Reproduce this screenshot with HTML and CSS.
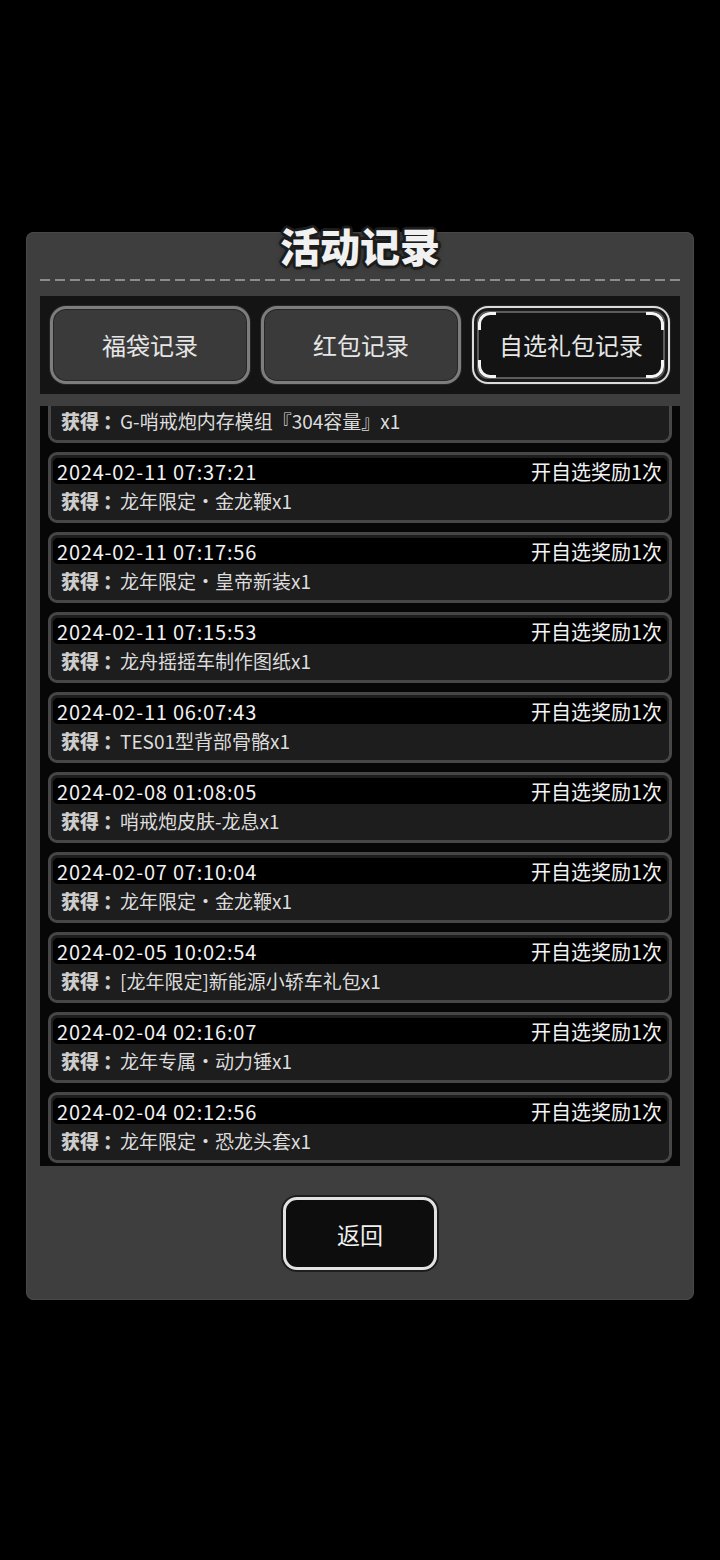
FILE: index.html
```html
<!DOCTYPE html>
<html lang="zh-CN">
  <head>
    <meta charset="UTF-8" />
    <meta name="viewport" content="width=device-width, initial-scale=1.0" />
    <title>活动记录</title>
    <link rel="stylesheet" href="styles.css">
  </head>
  <body>
    <!-- Record dialog -->
    <div class="panel">
      <div class="panel-head">
        <h1 class="title">活动记录</h1>
      </div>
      <div class="dash"></div>

      <!-- Tabs -->
      <div class="tabs">
        <div class="tab">福袋记录</div>
        <div class="tab">红包记录</div>
        <div class="tab active">自选礼包记录</div>
      </div>

      <!-- Record list (scrolled a little, first row half hidden) -->
      <div class="list">
        <div class="list-inner">
          <div class="item">
            <div class="item-top"></div>
            <div class="item-body"><b>获得<i>：</i></b>G-哨戒炮内存模组『304容量』x1</div>
          </div>
          <div class="item">
            <div class="item-top"><span>2024-02-11 07:37:21</span><span>开自选奖励1次</span></div>
            <div class="item-body"><b>获得<i>：</i></b>龙年限定<em>·</em>金龙鞭x1</div>
          </div>
          <div class="item">
            <div class="item-top"><span>2024-02-11 07:17:56</span><span>开自选奖励1次</span></div>
            <div class="item-body"><b>获得<i>：</i></b>龙年限定<em>·</em>皇帝新装x1</div>
          </div>
          <div class="item">
            <div class="item-top"><span>2024-02-11 07:15:53</span><span>开自选奖励1次</span></div>
            <div class="item-body"><b>获得<i>：</i></b>龙舟摇摇车制作图纸x1</div>
          </div>
          <div class="item">
            <div class="item-top"><span>2024-02-11 06:07:43</span><span>开自选奖励1次</span></div>
            <div class="item-body"><b>获得<i>：</i></b>TES01型背部骨骼x1</div>
          </div>
          <div class="item">
            <div class="item-top"><span>2024-02-08 01:08:05</span><span>开自选奖励1次</span></div>
            <div class="item-body"><b>获得<i>：</i></b>哨戒炮皮肤-龙息x1</div>
          </div>
          <div class="item">
            <div class="item-top"><span>2024-02-07 07:10:04</span><span>开自选奖励1次</span></div>
            <div class="item-body"><b>获得<i>：</i></b>龙年限定<em>·</em>金龙鞭x1</div>
          </div>
          <div class="item">
            <div class="item-top"><span>2024-02-05 10:02:54</span><span>开自选奖励1次</span></div>
            <div class="item-body"><b>获得<i>：</i></b>[龙年限定]新能源小轿车礼包x1</div>
          </div>
          <div class="item">
            <div class="item-top"><span>2024-02-04 02:16:07</span><span>开自选奖励1次</span></div>
            <div class="item-body"><b>获得<i>：</i></b>龙年专属<em>·</em>动力锤x1</div>
          </div>
          <div class="item">
            <div class="item-top"><span>2024-02-04 02:12:56</span><span>开自选奖励1次</span></div>
            <div class="item-body"><b>获得<i>：</i></b>龙年限定<em>·</em>恐龙头套x1</div>
          </div>
        </div>
      </div>

      <div class="foot">
        <div class="back-btn">返回</div>
      </div>
    </div>
  </body>
</html>
```

FILE: styles.css
```css
body {
  margin: 0;
  padding: 232px 26px 0;
  background: #000;
  font-family: "Noto Sans CJK SC", "Noto Sans", sans-serif;
  color: #eee;
}
.panel {
  background: #3e3e3e;
  border-radius: 8px;
  padding: 0 14px 30px;
  box-shadow: inset 0 0 0 1px #484848;
}
.panel-head {
  height: 46px;
  display: flex;
  justify-content: center;
}
.title {
  margin: -11px 0 0;
  font-size: 40px;
  line-height: 48px;
  font-weight: 900;
  color: #f1f1f1;
  text-shadow:
    3px 0 0 #1c1c1c, -3px 0 0 #1c1c1c, 0 3px 0 #1c1c1c, 0 -3px 0 #1c1c1c,
    2px 2px 0 #1c1c1c, -2px 2px 0 #1c1c1c, 2px -2px 0 #1c1c1c, -2px -2px 0 #1c1c1c,
    0 0 6px rgba(0, 0, 0, 0.8);
}
.dash {
  height: 2px;
  margin-top: 1px;
  background: repeating-linear-gradient(90deg, #8c8c8c 0 10px, transparent 10px 15px);
}
.tabs {
  margin-top: 15px;
  background: #141414;
  padding: 10px;
  display: flex;
  gap: 11px;
}
.tab {
  position: relative;
  flex: 1;
  height: 78px;
  box-sizing: border-box;
  display: flex;
  align-items: center;
  justify-content: center;
  background: #3a3a3a;
  border: 3px solid #7d7d7d;
  border-radius: 16px;
  box-shadow: 0 0 0 1px #262626, inset 0 0 0 1px #262626;
  font-size: 24px;
  line-height: 30px;
  color: #e6e6e6;
}
.tab.active {
  background: #131313;
  border: 2px solid #dcdcdc;
  box-shadow: 0 0 0 1px #262626, inset 0 0 0 3px #1a1a1a, inset 0 0 0 5px #5c5c5c;
}
.tab.active::before {
  content: "";
  position: absolute;
  inset: 4px;
  border: 3px solid #f4f4f4;
  border-radius: 12px;
  -webkit-mask:
    linear-gradient(#000 0 0) top left / 18px 18px no-repeat,
    linear-gradient(#000 0 0) top right / 18px 18px no-repeat,
    linear-gradient(#000 0 0) bottom left / 18px 18px no-repeat,
    linear-gradient(#000 0 0) bottom right / 18px 18px no-repeat;
}
.list {
  margin-top: 12px;
  height: 760px;
  overflow: hidden;
  background: #070707;
  padding: 0 8px;
}
.list-inner {
  margin-top: -34px;
  display: flex;
  flex-direction: column;
  gap: 9px;
}
.item {
  height: 71px;
  box-sizing: border-box;
  background: #1d1d1d;
  border: 3px solid #474747;
  border-radius: 9px;
  padding: 3px 2px;
}
.item-top {
  height: 26px;
  background: #000;
  border-radius: 5px;
  display: flex;
  justify-content: space-between;
  align-items: center;
  padding: 0 5px 0 4px;
  font-size: 20px;
  color: #f2f2f2;
}
.item-top span:first-child {
  letter-spacing: 0.8px;
}
.item-body {
  height: 33px;
  display: flex;
  align-items: center;
  padding-left: 8px;
  font-size: 19px;
  color: #dcdcdc;
}
.item-body b {
  color: #cdcdcd;
  font-weight: 900;
}
.item-body i {
  font-style: normal;
  display: inline-block;
  margin-left: 4px;
  width: 17px;
}
.item-body em {
  font-style: normal;
  display: inline-block;
  width: 19px;
  text-align: center;
}
.foot {
  display: flex;
  justify-content: center;
  margin-top: 31px;
}
.back-btn {
  width: 148px;
  height: 67px;
  display: flex;
  align-items: center;
  justify-content: center;
  background: #0d0d0d;
  border: 3px solid #e2e2e2;
  border-radius: 14px;
  box-shadow: 0 0 0 2px #1e1e1e;
  font-size: 23px;
  line-height: 28px;
  color: #f0f0f0;
}
```
